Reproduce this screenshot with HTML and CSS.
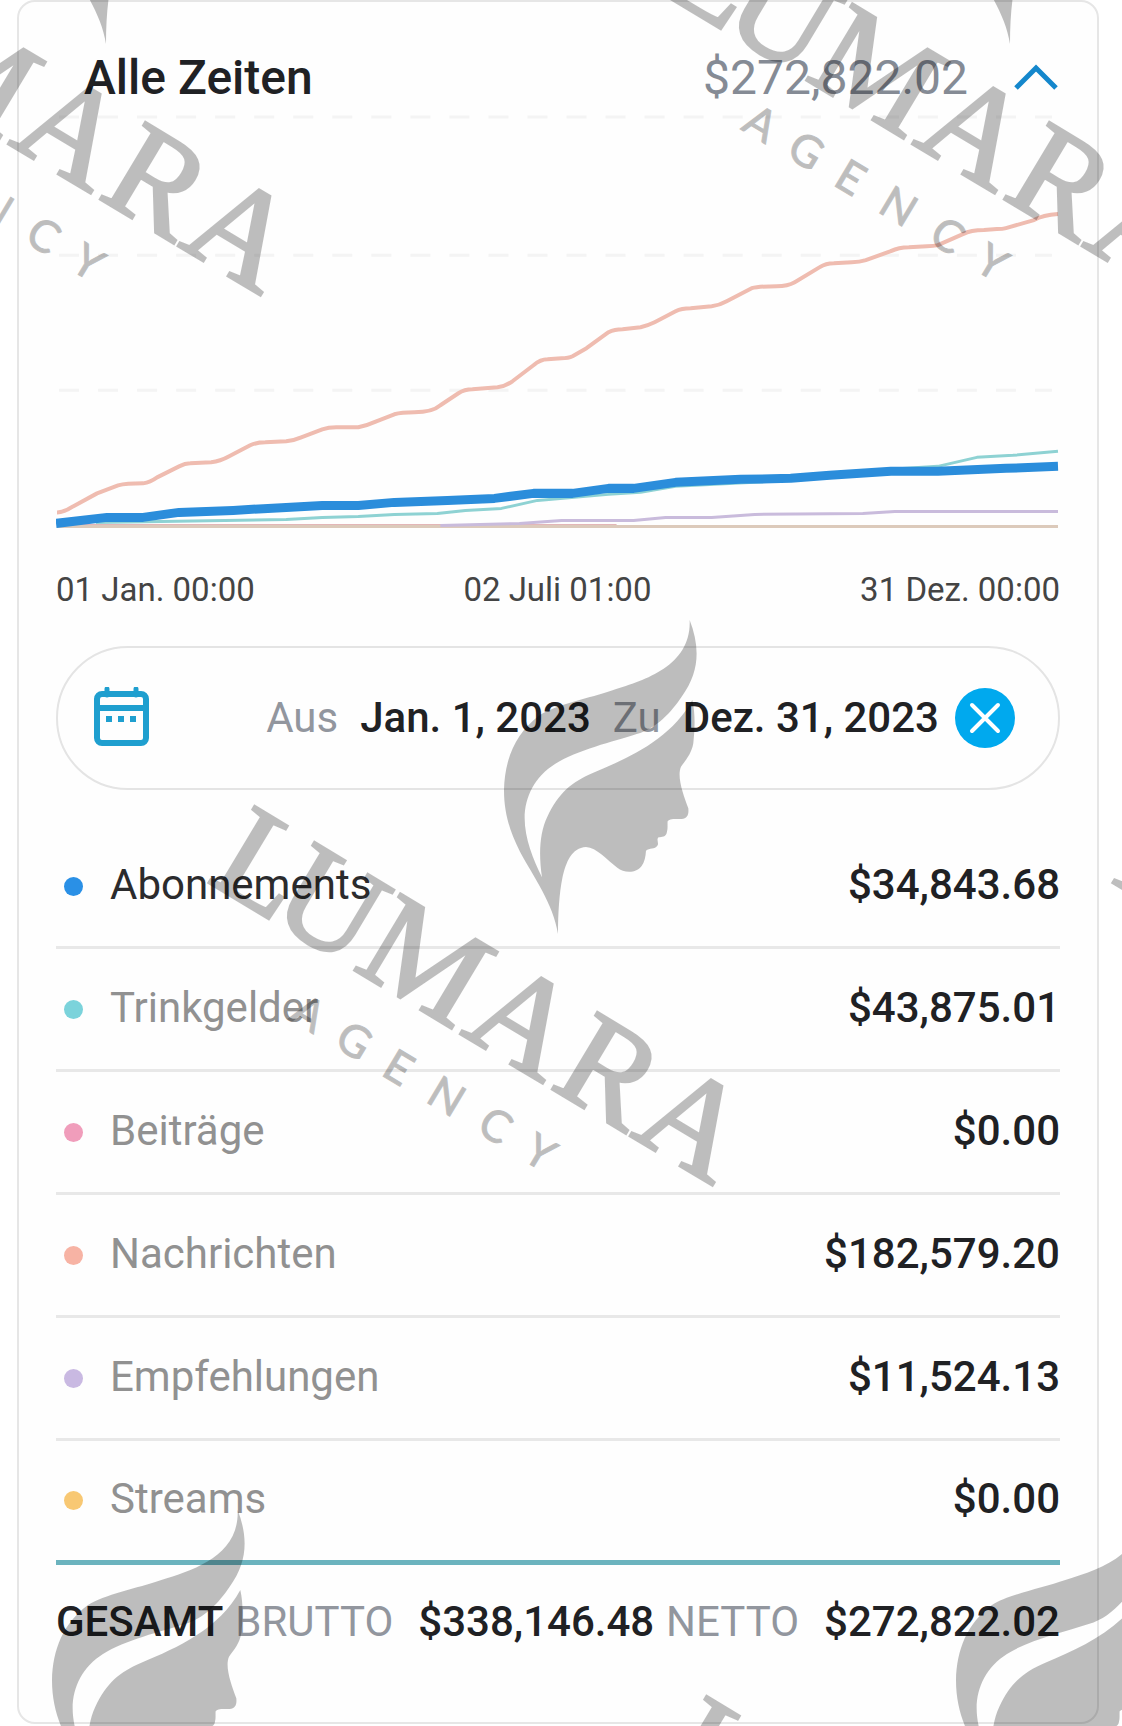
FILE: index.html
```html
<!DOCTYPE html>
<html lang="de">
<head>
<meta charset="utf-8">
<meta name="viewport" content="width=device-width, initial-scale=1">
<title>Alle Zeiten</title>
<link rel="stylesheet" href="styles.css">
</head>
<body>
<main class="page">
  <section class="card">
    <header class="card-header">
      <h1 class="title">Alle Zeiten</h1>
      <span class="header-amount">$272,822.02</span>
      <button class="icon-button" type="button" aria-label="Einklappen">
        <svg width="46" height="32" viewBox="0 0 46 32" fill="none" stroke="#1487cc" stroke-width="5"><path d="M2 26 22 6l20 20"/></svg>
      </button>
    </header>

    <svg class="chart" viewBox="0 0 1003 430" role="img" aria-label="Einnahmen im Jahr 2023">
      <g class="grid">
        <path d="M3 7H995"/><path d="M3 145H995"/><path d="M3 280H995"/>
      </g>
      <g class="series">
        <path class="posts" d="M1 415H560"/>
        <path class="streams" d="M1 416H1001"/>
        <path class="referrals" d="M384 415 463 413 505 410 577 410 609 407 655 407 698 404 806 403 838 401H1001"/>
        <path class="tips" d="M40 412 105 411 230 409 266 407 302 406 338 404 381 403 409 400 445 398 481 390 552 384 584 382 619 376 734 370 834 359 881 356 920 347 956 345 1001 341"/>
        <path class="messages" d="M1 402Q8 402 17 396L41 383 62 375Q70 373 87 373 94 372 101 367L123 356Q129 353 134 353L155 352Q164 351 173 346L194 335Q200 332 209 332L230 331Q238 330 245 327L266 319Q272 317 280 317L302 317Q311 315 320 311L338 304Q345 302 358 302 376 302 384 295L402 283Q408 279 416 279L441 277Q449 276 456 271L477 255Q484 249 491 249L505 248Q512 248 516 246L530 238 552 222Q558 219 566 219L584 217Q592 215 598 212L619 201Q625 198 634 198L655 196Q663 195 670 191L695 178Q702 176 720 176 731 176 738 172L763 157Q769 153 777 153L795 152Q803 152 809 150L834 141Q842 137 852 137L870 136Q877 136 881 135L906 124Q914 120 927 120L940 119Q946 119 949 118L977 110Q986 105 1001 104"/>
        <path class="subscriptions" d="M0 413 51 407 87 407 123 402 177 400 230 397 266 395 302 395 338 392 391 390 438 388 477 383 516 383 552 378 577 378 619 372 684 369 734 368 773 365 834 361 881 361 949 358 1001 356"/>
      </g>
    </svg>
    <div class="axis"><span>01 Jan. 00:00</span><span>02 Juli 01:00</span><span>31 Dez. 00:00</span></div>

    <div class="range">
      <button class="icon-button" type="button" aria-label="Kalender">
        <svg width="56" height="62" viewBox="0 0 56 62" fill="none" stroke="#1f9fcf" stroke-width="6">
          <rect x="4" y="7" width="49" height="49" rx="5"/><path d="M4 21H53"/><path d="M14 8V2M43 8V2" stroke-linecap="round" stroke-width="5"/><path d="M13 32h6M25 32h6M37 32h6"/>
        </svg>
      </button>
      <div class="range-dates">
        <span class="muted">Aus</span>
        <button class="date" type="button">Jan. 1, 2023</button>
        <span class="muted">Zu</span>
        <button class="date" type="button">Dez. 31, 2023</button>
      </div>
      <button class="clear" type="button" aria-label="Zeitraum löschen">
        <svg width="32" height="32" viewBox="0 0 32 32" fill="none" stroke="#fff" stroke-width="4" stroke-linecap="round"><path d="M3 3 29 29M29 3 3 29"/></svg>
      </button>
    </div>

    <table class="sources">
      <tbody>
        <tr class="active"><th scope="row"><i class="dot blue"></i>Abonnements</th><td>$34,843.68</td></tr>
        <tr><th scope="row"><i class="dot teal"></i>Trinkgelder</th><td>$43,875.01</td></tr>
        <tr><th scope="row"><i class="dot pink"></i>Beiträge</th><td>$0.00</td></tr>
        <tr><th scope="row"><i class="dot coral"></i>Nachrichten</th><td>$182,579.20</td></tr>
        <tr><th scope="row"><i class="dot violet"></i>Empfehlungen</th><td>$11,524.13</td></tr>
        <tr><th scope="row"><i class="dot amber"></i>Streams</th><td>$0.00</td></tr>
      </tbody>
    </table>

    <footer class="totals">
      <strong>GESAMT</strong>
      <span class="total"><span class="muted">BRUTTO</span><strong>$338,146.48</strong></span>
      <span class="total"><span class="muted">NETTO</span><strong>$272,822.02</strong></span>
    </footer>
  </section>

  <svg class="watermark" aria-hidden="true">
    <defs>
      <g id="stamp">
        <path transform="translate(480 600) scale(.3333)" d="M629 60C660 140 660 215 605 290C575 335 530 385 470 402C400 425 290 450 225 492C165 530 134 590 134 655C134 715 160 780 186 832C176 765 178 700 202 650C235 580 275 545 340 518C450 473 575 415 637 300C646 340 645 385 640 430C635 460 618 480 603 500C590 530 610 585 625 625C627 645 622 656 605 657C590 658 570 655 563 664C562 675 564 685 561 695C558 713 545 709 536 712C528 719 537 728 533 736C524 750 508 743 498 752C497 770 494 785 485 798C470 820 432 820 412 803C380 780 350 742 318 741C275 744 258 785 247 835C238 880 234 940 234 1002C220 910 160 830 120 755C90 695 72 640 72 570C74 480 105 400 180 345C225 315 330 294 400 270C500 240 635 195 629 60Z"/>
        <g transform="translate(207 884) rotate(31)">
          <text class="mark-name" x="-3 68 167 293 397 491" y="-2">LUMARA</text>
          <text class="mark-sub" x="139 191 246 298 357 410" y="74">AGENCY</text>
        </g>
      </g>
    </defs>
    <use href="#stamp"/>
    <use href="#stamp" x="904"/>
    <use href="#stamp" x="-452" y="-890"/>
    <use href="#stamp" x="452" y="-890"/>
    <use href="#stamp" x="-452" y="890"/>
    <use href="#stamp" x="452" y="890"/>
  </svg>
</main>
</body>
</html>
```
FILE: styles.css
```css
* { box-sizing: border-box; }

body {
  margin: 0;
  background: #fff;
  color: #202124;
  font-family: Roboto, "Liberation Sans", sans-serif;
  font-size: 42px;
  line-height: 44px;
}

button {
  padding: 0;
  border: 0;
  background: none;
  color: inherit;
  font: inherit;
}

.icon-button { display: flex; }

.page {
  position: relative;
  overflow: hidden;
  padding: 0 23px 2px 17px;
}

.card {
  padding: 0 37px;
  border: 2px solid #e6e6e6;
  border-radius: 18px;
  background: #fefefe;
}

.card-header {
  display: flex;
  align-items: center;
  padding: 44px 0 0 28px;
  line-height: 64px;
}

.title {
  flex: 1;
  margin: 0;
  font-size: 48px;
  font-weight: 500;
}

.header-amount {
  margin-right: 46px;
  color: #858b95;
  font-size: 48px;
}

.chart { display: block; width: 100%; }
.chart path { fill: none; stroke-width: 3; stroke-linejoin: round; }
.grid path { stroke: #f4f4f4; stroke-dasharray: 20 19; }
.series .posts { stroke: #e3b6b8; }
.series .streams { stroke: #dccabb; }
.series .referrals { stroke: #c9bbdc; }
.series .tips { stroke: #8ed2d3; }
.series .messages { stroke: #efbcb0; stroke-width: 4; }
.series .subscriptions { stroke: #2b8ddb; stroke-width: 9; }

.axis {
  display: flex;
  justify-content: space-between;
  margin-top: 30px;
  color: #444;
  font-size: 33px;
  line-height: 40px;
}

.range {
  display: flex;
  align-items: center;
  margin-top: 36px;
  height: 144px;
  padding: 0 43px 0 35px;
  border: 2px solid #e4e4e4;
  border-radius: 72px;
}

.range-dates {
  display: flex;
  flex: 1;
  justify-content: flex-end;
  gap: 22px;
  margin-right: 16px;
}

.date { font-weight: 500; }
.muted { color: #92969e; }

.clear {
  display: grid;
  place-items: center;
  width: 60px;
  height: 60px;
  border-radius: 50%;
  background: #00a9ee;
}

.sources {
  width: 100%;
  margin-top: 36px;
  border-collapse: separate;
  border-spacing: 0;
}

.sources th,
.sources td {
  height: 123px;
  padding: 0 0 3px;
  border-bottom: 3px solid #e8e8e8;
}

.sources th { color: #919191; font-weight: 400; text-align: left; }
.sources td { font-weight: 500; text-align: right; }
.sources .active th { color: #2b2b2d; }
.sources tr:last-child > * { height: 124px; border-bottom: 5px solid #6bb3be; }

.dot {
  display: inline-block;
  width: 19px;
  height: 19px;
  margin: 0 27px 0 8px;
  border-radius: 50%;
  vertical-align: 3px;
}

.blue { background: #2a90e6; }
.teal { background: #7bd3db; }
.pink { background: #f09dbb; }
.coral { background: #f7b3a4; }
.violet { background: #c9b9e2; }
.amber { background: #f8c873; }

.totals {
  display: flex;
  justify-content: space-between;
  padding: 35px 0 78px;
}

.totals strong { font-weight: 500; }
.total { display: flex; gap: 25px; }

.watermark {
  position: absolute;
  inset: 0;
  width: 100%;
  height: 100%;
  opacity: 0.25;
  pointer-events: none;
}

.mark-name {
  font-family: "Liberation Serif", serif;
  font-size: 136px;
  stroke: #000;
  stroke-width: 3;
}

.mark-sub {
  font-family: Lato, sans-serif;
  font-size: 44px;
  stroke: #000;
  stroke-width: 1;
}
```
